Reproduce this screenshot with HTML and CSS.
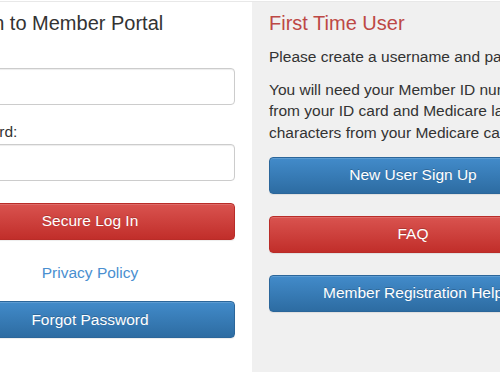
FILE: index.html
```html
<!DOCTYPE html>
<html>
<head>
<meta charset="utf-8">
<link rel="stylesheet" href="styles.css">
</head>
<body>
<div class="page">
  <div class="login">
    <h2 class="title title-shift">Sign In to Member Portal</h2>
    <div class="group">
      <label class="label">Login:</label>
      <div class="input"></div>
    </div>
    <div class="group">
      <label class="label">Password:</label>
      <div class="input"></div>
    </div>
    <button class="btn btn-red btn-login">Secure Log In</button>
    <a class="link">Privacy Policy</a>
    <button class="btn btn-blue">Forgot Password</button>
  </div>
  <div class="panel">
    <h2 class="title title-red">First Time User</h2>
    <p class="text">Please create a username and password to access the portal.</p>
    <p class="text text-last">You will need your Member ID number<br>from your ID card and Medicare last four<br>characters from your Medicare card.</p>
    <div class="actions">
      <button class="btn btn-blue">New User Sign Up</button>
      <button class="btn btn-red">FAQ</button>
      <button class="btn btn-blue">Member Registration Help</button>
    </div>
  </div>
</div>
</body>
</html>
```

FILE: styles.css
```css
html, body {
  margin: 0;
  padding: 0;
  background: #fff;
  overflow: hidden;
}
body {
  font-family: "Liberation Sans", Arial, sans-serif;
  font-size: 15.5px;
  line-height: 21.4px;
  color: #333;
}
.page {
  margin-top: 1px;
  border-top: 1px solid #e8e8e8;
  margin-left: -55px;
  display: flex;
  align-items: flex-start;
  gap: 17px;
  width: 700px;
}
.login {
  width: 290px;
  flex: none;
  display: flex;
  flex-direction: column;
}
.title {
  margin: 10px 0 12px;
  font-size: 20px;
  line-height: 22px;
  font-weight: normal;
  color: #333;
  white-space: nowrap;
}
.title-shift {
  margin-left: -3px;
}
.title-red {
  color: #bd4845;
}
.group {
  margin-bottom: 16px;
}
.label {
  display: block;
  margin-bottom: 1px;
  white-space: nowrap;
}
.input {
  height: 35px;
  border: 1px solid #ccc;
  border-radius: 4px;
  background: #fff;
  box-shadow: inset 0 1px 1px rgba(0,0,0,0.075);
}
.btn {
  display: block;
  width: 100%;
  height: 37px;
  padding: 0 12px;
  border-radius: 4px;
  border: 1px solid transparent;
  font-family: inherit;
  font-size: 15.5px;
  color: #fff;
  text-align: center;
  white-space: nowrap;
  text-shadow: 0 -1px 0 rgba(0,0,0,0.2);
  box-shadow: inset 0 1px 0 rgba(255,255,255,0.15), 0 1px 1px rgba(0,0,0,0.075);
}
.btn-red {
  background: linear-gradient(to bottom, #d9534f 0%, #c12e2a 100%);
  border-color: #b92c28;
}
.btn-blue {
  background: linear-gradient(to bottom, #428bca 0%, #2d6ca2 100%);
  border-color: #2b669a;
}
.btn-login {
  margin-top: 6px;
}
.link {
  display: block;
  margin: 22px 0 18px;
  text-align: center;
  color: #4a8fd0;
}
.panel {
  flex: none;
  width: 288px;
  margin-top: 0;
  padding: 0 17px 60px;
  background: #f0f0f0;
}
.text {
  margin: 0 0 11.5px;
  white-space: nowrap;
}
.text-last {
  margin-bottom: 13.5px;
}
.actions {
  display: flex;
  flex-direction: column;
  gap: 22px;
}
```
